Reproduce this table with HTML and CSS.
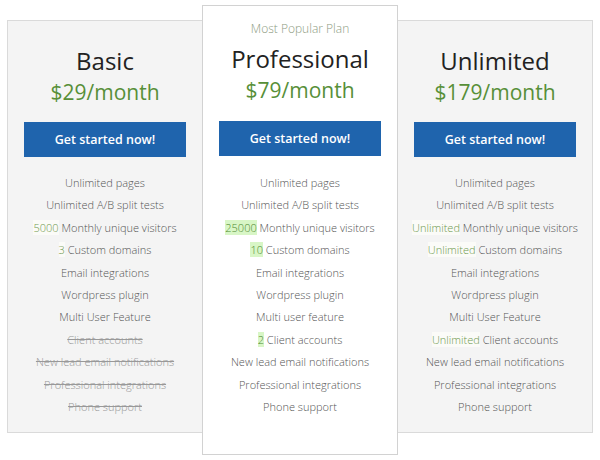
FILE: index.html
```html
<!DOCTYPE html>
<html>
<head>
<meta charset="utf-8">
<link rel="stylesheet" href="styles.css">
</head>
<body>
<div class="plans">
  <div class="card side">
    <h2 class="name">Basic</h2>
    <div class="price">$29/month</div>
    <a class="btn">Get started now!</a>
    <ul class="features">
      <li>Unlimited pages</li>
      <li>Unlimited A/B split tests</li>
      <li><span class="hl">5000</span> Monthly unique visitors</li>
      <li><span class="hl">3</span> Custom domains</li>
      <li>Email integrations</li>
      <li>Wordpress plugin</li>
      <li>Multi User Feature</li>
      <li class="off">Client accounts</li>
      <li class="off">New lead email notifications</li>
      <li class="off">Professional integrations</li>
      <li class="off">Phone support</li>
    </ul>
  </div>
  <div class="card featured">
    <div class="popular">Most Popular Plan</div>
    <h2 class="name">Professional</h2>
    <div class="price">$79/month</div>
    <a class="btn">Get started now!</a>
    <ul class="features">
      <li>Unlimited pages</li>
      <li>Unlimited A/B split tests</li>
      <li><span class="hl">25000</span> Monthly unique visitors</li>
      <li><span class="hl">10</span> Custom domains</li>
      <li>Email integrations</li>
      <li>Wordpress plugin</li>
      <li>Multi user feature</li>
      <li><span class="hl">2</span> Client accounts</li>
      <li>New lead email notifications</li>
      <li>Professional integrations</li>
      <li>Phone support</li>
    </ul>
  </div>
  <div class="card side">
    <h2 class="name">Unlimited</h2>
    <div class="price">$179/month</div>
    <a class="btn">Get started now!</a>
    <ul class="features">
      <li>Unlimited pages</li>
      <li>Unlimited A/B split tests</li>
      <li><span class="hl">Unlimited</span> Monthly unique visitors</li>
      <li><span class="hl">Unlimited</span> Custom domains</li>
      <li>Email integrations</li>
      <li>Wordpress plugin</li>
      <li>Multi User Feature</li>
      <li><span class="hl">Unlimited</span> Client accounts</li>
      <li>New lead email notifications</li>
      <li>Professional integrations</li>
      <li>Phone support</li>
    </ul>
  </div>
</div>
</body>
</html>
```
FILE: styles.css
```css
html, body {
  margin: 0;
  padding: 0;
  background: #ffffff;
  font-family: "Open Sans", "Liberation Sans", sans-serif;
}

.plans {
  display: flex;
  align-items: flex-start;
  padding-left: 7px;
}

.card {
  width: 196px;
  box-sizing: border-box;
  display: flex;
  flex-direction: column;
  align-items: center;
  text-align: center;
}

.side {
  margin-top: 20px;
  background: #f4f4f4;
  border: 1px solid #dadada;
  padding: 25px 16px 14px;
}

.featured {
  margin-top: 5px;
  margin-left: -1px;
  margin-right: -1px;
  background: #ffffff;
  border: 1px solid #d2d2d2;
  padding: 15px 16px 36px;
  position: relative;
  z-index: 1;
}

.popular {
  font-size: 12px;
  line-height: 16px;
  font-weight: 300;
  color: #8e9c82;
  margin-bottom: 7px;
}

.name {
  margin: 0;
  font-size: 24px;
  line-height: 30px;
  font-weight: 400;
  color: #222222;
}

.price {
  margin-top: 2px;
  font-size: 21px;
  line-height: 28px;
  font-weight: 400;
  color: #578f38;
}

.btn {
  display: block;
  align-self: stretch;
  margin-top: 16px;
  height: 35px;
  line-height: 35px;
  background: #1f64ad;
  color: #ffffff;
  font-size: 12.5px;
  font-weight: 600;
}

.featured .btn {
  margin-top: 17px;
}

.features {
  list-style: none;
  margin: 15px -12px 0;
  padding: 0;
  align-self: stretch;
}

.featured .features {
  margin-top: 16px;
}

.features li {
  font-size: 11px;
  line-height: 22.4px;
  font-weight: 300;
  color: #555555;
  white-space: nowrap;
}

.features li.off {
  color: #999999;
  text-decoration: line-through;
}

.hl {
  color: #6f9a4e;
  background: #fbfbf8;
}

.featured .hl {
  color: #4f8a30;
  background: #d8f6c6;
}
```
